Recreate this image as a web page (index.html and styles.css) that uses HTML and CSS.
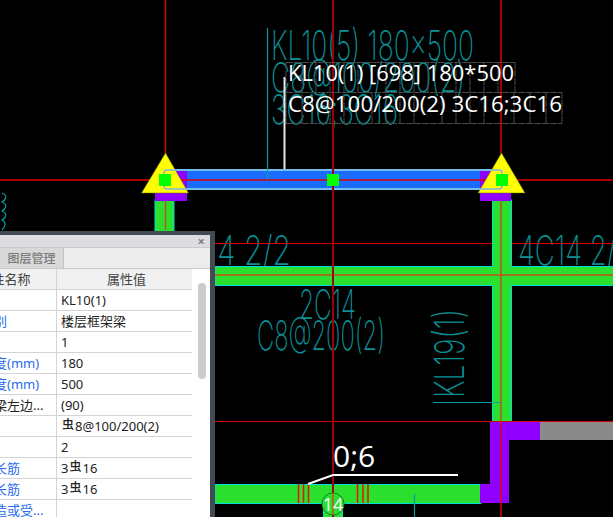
FILE: index.html
```html
<!DOCTYPE html>
<html lang="en">
<head>
    <meta charset="UTF-8">
    <meta name="viewport" content="width=device-width, initial-scale=1.0">
    <title>Beam editor</title>
    <link rel="stylesheet" href="styles.css">
</head>
<body>
    <div class="stage">
        <svg class="drawing" width="613" height="517" viewBox="0 0 613 517">
            <!-- teal annotation text -->
            <path class="leader" d="M2 193c5 2 5 6 0 9c5 2 5 6 0 9c5 2 5 6 0 9c4 2 4 6 0 10"/>
            <text class="cad" x="271" y="60" textLength="203" lengthAdjust="spacingAndGlyphs">KL10(5) 180x500</text>
            <text class="cad" x="271" y="92" textLength="194" lengthAdjust="spacingAndGlyphs">C8@100/200(2)</text>
            <text class="cad" x="271" y="124" textLength="127" lengthAdjust="spacingAndGlyphs">3C16;3C16</text>
            <text class="cad" x="206" y="265" textLength="85" lengthAdjust="spacingAndGlyphs">14 2/2</text>
            <text class="cad" x="518" y="265" textLength="115" lengthAdjust="spacingAndGlyphs">4C14 2/2</text>
            <text class="cad" x="299" y="319" textLength="57" lengthAdjust="spacingAndGlyphs">2C14</text>
            <text class="cad" x="257" y="350" textLength="128" lengthAdjust="spacingAndGlyphs">C8@200(2)</text>
            <text class="cad" transform="translate(464 398) rotate(-90)" textLength="89" lengthAdjust="spacingAndGlyphs">KL19(1)</text>

            <!-- axis lines under the members -->
            <path class="axis" d="M165.5 0V230M0 180H613M501 0V230"/>
            <path class="axis-thin" d="M215 243.5H613M215 421.5H613"/>

            <!-- lower beams and columns -->
            <rect class="member" x="155" y="200" width="19" height="32"/>
            <rect class="member" x="492.5" y="200" width="19" height="222"/>
            <rect class="member" x="215" y="266.5" width="400" height="19"/>
            <rect class="member-fill" x="493" y="266" width="18" height="20"/>
            <rect class="member" x="215" y="484.5" width="266" height="19"/>
            <rect class="member" x="323.5" y="510" width="19" height="10"/>
            <path class="purple" d="M490 421H540V440H509V503H480V484H490Z"/>
            <rect class="grey" x="540" y="421" width="73" height="19"/>
            <path class="axis-on-member" d="M215 275H613M501 200V421M165.5 200V230"/>
            <path class="axis-thin" d="M490 421.5H613"/>
            <path class="axis" d="M501 421V517"/>
            <path class="stirrup" d="M298.5 484V503M303.5 484V503M308.5 484V503M357.5 484V503M363 484V503M368 484V503"/>

            <!-- selected beam -->
            <rect class="beam" x="165" y="170" width="337" height="19"/>
            <rect class="purple" x="176" y="171" width="11" height="17"/>
            <rect class="purple" x="480" y="171" width="22" height="17"/>
            <rect class="purple" x="155" y="193" width="32" height="8"/>
            <rect class="purple" x="480" y="193" width="31" height="8"/>
            <path class="axis" d="M176 180H490"/>
            <path class="marker" d="M165.500 153L188.500 193H141.500Z"/>
            <path class="marker" d="M501.500 153L525 193H478Z"/>
            <rect class="select-box" x="164" y="170" width="338" height="19" rx="3"/>
            <path class="leader" d="M267.500 28V180M433 402.500H500M414.500 494V517"/>
            <path class="axis-dark" d="M333 0V517"/>
            <rect class="grip" x="159" y="174" width="12" height="12"/>
            <rect class="grip" x="327" y="174" width="12" height="12"/>
            <rect class="grip" x="496" y="174" width="12" height="12"/>

            <!-- floating label with its glyph cells -->
            <path class="cells" d="M286 62.500H515M286 92.500H562M286 123.500H562M286 62V124M302 62V124M316 62V92M330 62V124M344 62V124M358 62V92M372 92V124M386 62V124M400 62V124M414 62V124M428 62V92M442 92V124M456 62V124M470 62V124M484 62V124M498 62V92M515 62V92M514 92V124M530 92V124M546 92V124M562 92V124"/>
            <path class="white-bar" d="M284.500 77V169"/>
            <text class="label" x="288" y="81" textLength="226" lengthAdjust="spacingAndGlyphs">KL10(1) [698] 180*500</text>
            <text class="label" x="288" y="112" textLength="274" lengthAdjust="spacingAndGlyphs">C8@100/200(2) 3C16;3C16</text>

            <!-- bottom callout -->
            <path class="callout" d="M308 484L333 475H458"/>
            <text class="count" x="333" y="467">0;6</text>
            <circle class="bubble" cx="333" cy="504" r="11"/>
            <path class="axis-on-member" d="M333 493V515"/>
            <text class="bubble-text" x="333" y="511">14</text>
        </svg>

        <div class="panel">
            <div class="panel-title"><span class="panel-close">×</span></div>
            <div class="panel-tabs"><div class="tab">图层管理</div></div>
            <div class="panel-body">
                <div class="prop-table">
                    <div class="prop-row prop-head"><div class="prop-name">属性名称</div><div class="prop-value">属性值</div></div>
                    <div class="prop-row"><div class="prop-name">名称</div><div class="prop-value">KL10(1)</div></div>
                    <div class="prop-row"><div class="prop-name link">结构类别</div><div class="prop-value">楼层框架梁</div></div>
                    <div class="prop-row"><div class="prop-name">跨数量</div><div class="prop-value">1</div></div>
                    <div class="prop-row"><div class="prop-name link">截面宽度(mm)</div><div class="prop-value">180</div></div>
                    <div class="prop-row"><div class="prop-name link">截面高度(mm)</div><div class="prop-value">500</div></div>
                    <div class="prop-row"><div class="prop-name">轴线距梁左边...</div><div class="prop-value">(90)</div></div>
                    <div class="prop-row"><div class="prop-name link">箍筋</div><div class="prop-value"><span class="rebar">虫</span>8@100/200(2)</div></div>
                    <div class="prop-row"><div class="prop-name">肢数</div><div class="prop-value">2</div></div>
                    <div class="prop-row"><div class="prop-name link">上部通长筋</div><div class="prop-value">3<span class="rebar">虫</span>16</div></div>
                    <div class="prop-row"><div class="prop-name link">下部通长筋</div><div class="prop-value">3<span class="rebar">虫</span>16</div></div>
                    <div class="prop-row"><div class="prop-name link">侧面构造或受...</div><div class="prop-value"></div></div>
                </div>
                <div class="scrollbar"><div class="scroll-thumb"></div></div>
            </div>
        </div>
    </div>
</body>
</html>
```

FILE: styles.css
```css
html, body {
    margin: 0;
    padding: 0;
    background: #000;
}
.stage {
    position: relative;
    width: 613px;
    height: 517px;
    overflow: hidden;
    background: #000;
}
.drawing {
    display: block;
}
.cad {
    font-family: Inter, "Liberation Sans", sans-serif;
    font-size: 41px;
    font-weight: 200;
    fill: #0a8f95;
}
.leader {
    fill: none;
    stroke: #0a9aa2;
    stroke-width: 1.2;
}
.axis {
    fill: none;
    stroke: #e00000;
    stroke-width: 1.5;
}
.axis-thin {
    fill: none;
    stroke: #d80000;
    stroke-width: 1;
}
.axis-dark {
    fill: none;
    stroke: #a00000;
    stroke-width: 2;
}
.axis-on-member {
    fill: none;
    stroke: #c4501c;
    stroke-width: 1.5;
}
.member {
    fill: #2bdf2f;
    stroke: #00dcdc;
    stroke-width: 1;
}
.member-fill {
    fill: #2bdf2f;
}
.purple {
    fill: #8f00ff;
}
.grey {
    fill: #8a8a8a;
}
.stirrup {
    fill: none;
    stroke: #f01000;
    stroke-width: 1.5;
}
.beam {
    fill: #1a6cff;
    stroke: #4fdcff;
    stroke-width: 2;
}
.marker {
    fill: #ffff00;
    stroke: #6a6a00;
    stroke-width: 0.5;
}
.select-box {
    fill: none;
    stroke: #7fb4e6;
    stroke-width: 1.5;
}
.grip {
    fill: #00ff00;
}
.cells {
    fill: none;
    stroke: #4a4a4a;
    stroke-width: 1;
    stroke-dasharray: 7 1;
}
.white-bar {
    fill: none;
    stroke: #e6e6e6;
    stroke-width: 2;
}
.label {
    font-family: "Open Sans", "Liberation Sans", sans-serif;
    font-size: 22px;
    fill: #fff;
}
.callout {
    fill: none;
    stroke: #fff;
    stroke-width: 2;
}
.count {
    font-family: "Open Sans", "Liberation Sans", sans-serif;
    font-size: 30px;
    fill: #fff;
}
.bubble {
    fill: #2bdf2f;
    stroke: #0c7f1a;
    stroke-width: 1;
}
.bubble-text {
    font-family: "Open Sans", "Liberation Sans", sans-serif;
    font-size: 18px;
    fill: #fff;
    text-anchor: middle;
}

/* floating property window */
.panel {
    position: absolute;
    left: 0;
    top: 231px;
    width: 210px;
    height: 286px;
    border-top: 4px solid #424a52;
    border-right: 5px solid #424a52;
    display: flex;
    flex-direction: column;
    overflow: hidden;
    font-family: "Noto Sans", "Noto Sans CJK SC", sans-serif;
    font-size: 13px;
    color: #222;
    background: #ececec;
}
.panel-title {
    height: 12px;
    background: #dcdde0;
    display: flex;
    justify-content: flex-end;
    align-items: center;
    padding-right: 5px;
    flex: none;
}
.panel-close {
    color: #808080;
    font-size: 13px;
    font-weight: bold;
    line-height: 12px;
}
.panel-tabs {
    height: 22px;
    flex: none;
    display: flex;
    box-sizing: border-box;
    border-top: 1px solid #c9c9c9;
    border-bottom: 1px solid #c9c9c9;
    background: #ececec;
}
.tab {
    width: 64px;
    box-sizing: border-box;
    background: #d8d8d8;
    border-right: 1px solid #c4c4c4;
    color: #7c7c7c;
    font-size: 12px;
    font-weight: 500;
    text-align: center;
    line-height: 20px;
    font-family: "Noto Sans CJK SC", sans-serif;
}
.panel-body {
    flex: 1;
    display: flex;
    min-height: 0;
    background: #fff;
}
.prop-table {
    width: 192px;
    flex: none;
    overflow: hidden;
}
.prop-row {
    display: flex;
    height: 21px;
    box-sizing: border-box;
    margin-left: -47px;
    border-bottom: 1.5px solid #d4d4d4;
    line-height: 20px;
}
.prop-head {
    background: #f0f0f0;
    color: #444;
    text-align: center;
}
.prop-name {
    width: 104px;
    flex: none;
    box-sizing: border-box;
    padding-left: 2px;
    border-right: 1.5px solid #d4d4d4;
    white-space: nowrap;
    overflow: hidden;
}
.prop-head .prop-name {
    padding-left: 0;
}
.prop-value {
    flex: 1;
    padding-left: 4px;
    white-space: nowrap;
}
.link {
    color: #2a6cf0;
}
.rebar {
    font-family: "Noto Sans CJK SC", sans-serif;
    font-size: 12px;
    font-weight: 500;
    line-height: 0;
    vertical-align: 2px;
    margin: 0 1px;
}
.scrollbar {
    flex: 1;
    padding: 14px 4px 0 6px;
}
.scroll-thumb {
    height: 96px;
    background: #cccccc;
    border-radius: 4px;
}
```
